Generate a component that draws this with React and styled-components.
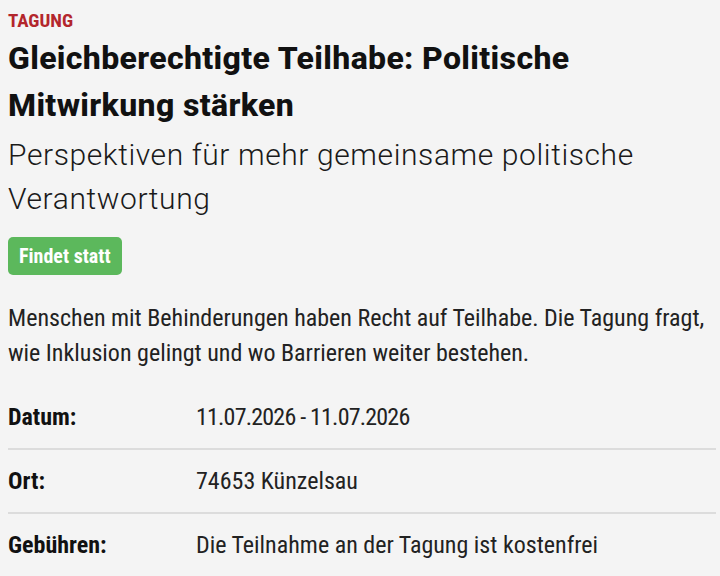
import React from "react";
import styled, { createGlobalStyle } from "styled-components";

const GlobalStyle = createGlobalStyle`
  html, body { margin: 0; padding: 0; background: #f4f4f4; }
  * { box-sizing: border-box; }
`;

const Page = styled.main`
  font-family: Roboto, "Noto Sans", sans-serif;
  font-stretch: 75%;
  color: #1c1c1c;
  padding: 10px 4px 0 8px;
  display: flex;
  flex-direction: column;
`;

const Kicker = styled.div`
  font-size: 19px;
  line-height: 22px;
  font-weight: 700;
  color: #b3262c;
  text-transform: uppercase;
`;

const Title = styled.h1`
  margin: 3px 0 0;
  font-size: 32px;
  font-stretch: 100%;
  letter-spacing: 0.35px;
  line-height: 47px;
  font-weight: 800;
  color: #111;
`;

const Subtitle = styled.h2`
  margin: 4px 0 0;
  font-size: 30px;
  font-stretch: 100%;
  letter-spacing: 0.6px;
  line-height: 44px;
  font-weight: 300;
  color: #1a1a1a;
`;

const Badge = styled.span`
  align-self: flex-start;
  margin-top: 16px;
  height: 38px;
  padding: 0 11px;
  display: inline-flex;
  align-items: center;
  border-radius: 5px;
  background: #5cb85c;
  color: #fff;
  font-size: 20px;
  font-weight: 700;
`;

const Lead = styled.p`
  margin: 26px 0 0;
  font-size: 24px;
  line-height: 35px;
  font-weight: 400;
  color: #222;
`;

const Details = styled.dl`
  margin: 15px 0 0;
  display: flex;
  flex-direction: column;
`;

const Row = styled.div`
  display: grid;
  grid-template-columns: 188px 1fr;
  align-items: center;
  height: ${p => (p.$last ? "62px" : "64px")};
  border-bottom: ${p => (p.$last ? "none" : "2px solid #dcdcdc")};
  font-size: 24px;
  font-stretch: 87.5%;
`;

const Term = styled.dt`
  font-weight: 700;
  color: #111;
`;

const Value = styled.dd`
  margin: 0;
  font-weight: 400;
  color: #222;
  letter-spacing: ${p => (p.$numeric ? "-0.8px" : "0")};
`;

const rows = [
  { label: "Datum:", value: "11.07.2026 - 11.07.2026", numeric: true },
  { label: "Ort:", value: "74653 Künzelsau" },
  { label: "Gebühren:", value: "Die Teilnahme an der Tagung ist kostenfrei" },
];

export default function App() {
  return (
    <>
      <GlobalStyle />
      <Page>
        <Kicker>Tagung</Kicker>
        <Title>Gleichberechtigte Teilhabe: Politische Mitwirkung stärken</Title>
        <Subtitle>Perspektiven für mehr gemeinsame politische Verantwortung</Subtitle>
        <Badge>Findet statt</Badge>
        <Lead>
          Menschen mit Behinderungen haben Recht auf Teilhabe. Die Tagung fragt,
          wie Inklusion gelingt und wo Barrieren weiter bestehen.
        </Lead>
        <Details>
          {rows.map((r, i) => (
            <Row key={r.label} $last={i === rows.length - 1}>
              <Term>{r.label}</Term>
              <Value $numeric={r.numeric}>{r.value}</Value>
            </Row>
          ))}
        </Details>
      </Page>
    </>
  );
}
